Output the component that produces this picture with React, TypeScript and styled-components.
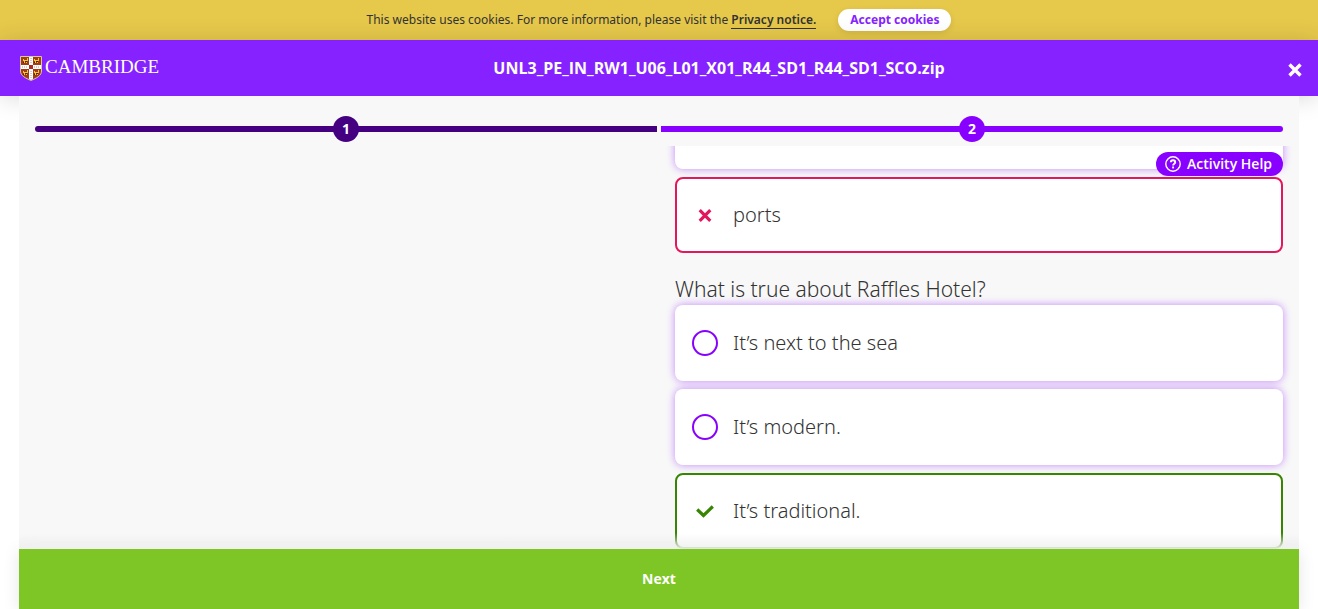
import React, { useState } from "react";
import styled, { createGlobalStyle, css } from "styled-components";

const GlobalStyle = createGlobalStyle`
  *, *::before, *::after { box-sizing: border-box; }
  body {
    margin: 0;
    background: #ffffff;
    color: #333333;
    font-family: "Open Sans", "Noto Sans", sans-serif;
  }
  button, input { font: inherit; }
`;

const Page = styled.div`
  display: flex;
  flex-direction: column;
  height: 100vh;
  overflow: hidden;
`;

const CookieBar = styled.aside`
  display: flex;
  flex: none;
  align-items: center;
  justify-content: center;
  gap: 22px;
  height: 40px;
  background: #e6c84b;
  font-family: "Noto Sans", sans-serif;
  font-size: 12px;
  line-height: 16px;
`;

const CookieText = styled.p`
  margin: 0;
`;

const PrivacyLink = styled.a`
  color: #333333;
  font-weight: 600;
  text-decoration: none;
  border-bottom: 1px solid #333333;
`;

const AcceptButton = styled.button`
  height: 22px;
  padding: 0 12px;
  border: 0;
  border-radius: 11px;
  background: #ffffff;
  color: #8522ff;
  font-weight: 700;
  box-shadow: 0 2px 6px rgba(0, 0, 0, 0.1);
  cursor: pointer;
`;

const Header = styled.header`
  display: grid;
  grid-template-columns: 160px 1fr 40px;
  flex: none;
  align-items: center;
  height: 56px;
  padding: 0 16px 0 20px;
  background: #8522ff;
  color: #ffffff;
  box-shadow: 0 2px 24px rgba(0, 0, 0, 0.15);
`;

const Brand = styled.a`
  display: flex;
  align-items: center;
  gap: 3px;
  color: #ffffff;
  font-family: "Liberation Serif", serif;
  font-size: 19px;
  line-height: 24px;
  text-decoration: none;
`;

const BrandName = styled.span`
  padding-bottom: 2px;
`;

const Title = styled.h1`
  margin: 0;
  padding-right: 4px;
  font-size: 16px;
  line-height: 24px;
  font-weight: 700;
  text-align: center;
`;

const CloseButton = styled.button`
  display: flex;
  justify-content: flex-end;
  padding: 4px 0 0;
  border: 0;
  background: none;
  color: #ffffff;
  cursor: pointer;
`;

const Activity = styled.main`
  position: relative;
  display: flex;
  flex: 1;
  flex-direction: column;
  min-height: 0;
  margin: 0 19px;
  background: #f8f8f8;
`;

const Progress = styled.ol`
  display: grid;
  grid-template-columns: 1fr 1fr;
  flex: none;
  align-items: center;
  gap: 4px;
  height: 50px;
  margin: 0;
  padding: 16px 16px 0;
  list-style: none;
`;

const Step = styled.li<{ $done?: boolean }>`
  display: flex;
  align-items: center;
  justify-content: center;
  height: 6px;
  border-radius: ${(p) => (p.$done ? "3px 0 0 3px" : "0 3px 3px 0")};
  background: ${(p) => (p.$done ? "#440080" : "#8800ff")};
`;

const StepButton = styled.button<{ $done?: boolean }>`
  flex: none;
  width: 26px;
  height: 26px;
  padding: 0;
  border: 0;
  border-radius: 50%;
  background: ${(p) => (p.$done ? "#440080" : "#8800ff")};
  color: #ffffff;
  font-size: 14px;
  line-height: 26px;
  font-weight: 700;
  cursor: pointer;
`;

const Columns = styled.div`
  position: relative;
  display: grid;
  grid-template-columns: 1fr 1fr;
  flex: 1;
  gap: 32px;
  min-height: 0;
  padding: 0 16px;
  overflow: hidden;

  &::after {
    content: "";
    position: absolute;
    inset: auto 0 0;
    height: 16px;
    background: linear-gradient(rgba(246, 246, 246, 0), rgba(240, 240, 240, 0.95));
    pointer-events: none;
  }
`;

const Questions = styled.form`
  display: flex;
  flex-direction: column;
  justify-content: flex-end;
  grid-column: 2;
  min-height: 0;
`;

const Question = styled.fieldset`
  display: flex;
  flex: none;
  flex-direction: column;
  gap: 8px;
  min-width: 0;
  margin: 0;
  padding: 0;
  border: 0;

  & + & { margin-top: 20px; }
`;

const Prompt = styled.legend`
  padding: 0;
  font-family: "Noto Sans", sans-serif;
  font-size: 21px;
  line-height: 32px;
  font-weight: 300;
`;

type Result = "right" | "wrong" | undefined;

const Option = styled.label<{ $result: Result }>`
  display: flex;
  align-items: center;
  gap: 15px;
  height: 76px;
  padding: 0 17px;
  border-radius: 8px;
  background: #ffffff;
  font-family: "Noto Sans", sans-serif;
  font-size: 20px;
  line-height: 28px;
  font-weight: 300;
  cursor: pointer;
  ${(p) =>
    p.$result
      ? css`
          padding: 0 15px;
          border: 2px solid ${p.$result === "right" ? "#378500" : "#e2175c"};
        `
      : css`
          box-shadow: 0 0 8px rgba(136, 0, 255, 0.45);
        `}
`;

const Mark = styled.span`
  display: grid;
  place-items: center;
  width: 26px;
  height: 26px;

  & > * { grid-area: 1 / 1; }
`;

const Radio = styled.input<{ $result: Result }>`
  appearance: none;
  width: 26px;
  height: 26px;
  margin: 0;
  border: 2px solid #8800ff;
  border-radius: 50%;
  background: #ffffff;
  opacity: ${(p) => (p.$result ? 0 : 1)};

  &:checked { box-shadow: inset 0 0 0 4px #ffffff, inset 0 0 0 12px #8800ff; }
`;

const HelpButton = styled.button`
  position: absolute;
  top: 6px;
  right: 16px;
  display: flex;
  align-items: center;
  gap: 6px;
  height: 24px;
  padding: 0 11px 0 9px;
  border: 0;
  border-radius: 12px;
  background: #8800ff;
  color: #ffffff;
  font-size: 14px;
  line-height: 24px;
  font-weight: 600;
  cursor: pointer;
`;

const NextButton = styled.button`
  flex: none;
  height: 60px;
  border: 0;
  background: #7dc625;
  color: #ffffff;
  font-size: 14px;
  line-height: 20px;
  font-weight: 700;
  box-shadow: 0 2px 16px rgba(0, 0, 0, 0.1);
  cursor: pointer;
`;

const Lion = ({ x, y }: { x: number; y: number }) => (
  <g transform={`translate(${x} ${y})`}>
    <path d="M0 1h1v1h3V0h1v3H4v2H3V4H2v1H1V3H0z" fill="#f0c832" />
    <path d="M2 3h2v1H2zM0 4h1v1H0z" fill="#4a2410" />
  </g>
);

const Shield = () => (
  <svg width="22" height="25" viewBox="0 0 22 25" aria-hidden="true">
    <path d="M.5.5h21V15c0 5-5 7-10.500 9.500C5.500 22 .5 20 .5 15z" fill="#a33a18" stroke="#d9c9a0" />
    <path d="M9 1h4v22l-2 1-2-1z" fill="#fff" />
    <path d="M1 9h20v4H1z" fill="#fff" />
    <path d="M9 9h4v4H9z" fill="#b0281e" />
    <path d="M11 2v5M11 15v7M2 11h6M14 11h6" stroke="#a8a0a0" strokeWidth="1" strokeDasharray="1 1" />
    <Lion x={3} y={2} />
    <Lion x={14} y={2} />
    <Lion x={3} y={14} />
    <Lion x={14} y={14} />
  </svg>
);

const Cross = () => (
  <svg width="14" height="14" viewBox="0 0 14 14" aria-hidden="true">
    <path d="M1.500 1.500l11 11M12.500 1.500l-11 11" fill="none" stroke="currentColor" strokeWidth="3.400" />
  </svg>
);

const WrongIcon = () => (
  <svg width="14" height="14" viewBox="0 0 14 14" role="img" aria-label="Incorrect">
    <path d="M1.700 2.200l10.600 10.600M12.300 2.200L1.700 12.800" fill="none" stroke="#e2175c" strokeWidth="3.200" />
  </svg>
);

const RightIcon = () => (
  <svg width="18" height="14" viewBox="0 0 18 14" role="img" aria-label="Correct">
    <path d="M1.200 5.500l6.300 6L16.800 2.500" fill="none" stroke="#378500" strokeWidth="3.200" />
  </svg>
);

const HelpIcon = () => (
  <svg width="16" height="16" viewBox="0 0 16 16" fill="none" stroke="currentColor" aria-hidden="true">
    <circle cx="8" cy="8" r="7.200" strokeWidth="1.400" />
    <path d="M5.800 6.300c0-1.300 1-2 2.200-2s2.200.8 2.200 1.900c0 1.500-2.100 1.500-2.100 3.200" strokeWidth="1.900" />
    <path d="M8.100 10.500v1.900" strokeWidth="1.900" />
  </svg>
);

interface Answer {
  id: string;
  text: string;
  result?: Result;
}

const placeAnswers: Answer[] = [
  { id: "place-a", text: "" },
  { id: "place-b", text: "ports", result: "wrong" },
];

const hotelAnswers: Answer[] = [
  { id: "sea", text: "It’s next to the sea" },
  { id: "modern", text: "It’s modern." },
  { id: "traditional", text: "It’s traditional.", result: "right" },
];

interface AnswersProps {
  name: string;
  answers: Answer[];
  initial: string;
}

const Answers = ({ name, answers, initial }: AnswersProps) => {
  const [chosen, setChosen] = useState(initial);
  return (
    <>
      {answers.map((a) => (
        <Option key={a.id} $result={a.result} htmlFor={a.id}>
          <Mark>
            <Radio
              type="radio"
              id={a.id}
              name={name}
              $result={a.result}
              checked={chosen === a.id}
              onChange={() => setChosen(a.id)}
            />
            {a.result === "wrong" && <WrongIcon />}
            {a.result === "right" && <RightIcon />}
          </Mark>
          {a.text}
        </Option>
      ))}
    </>
  );
};

export default function App() {
  return (
    <Page>
      <GlobalStyle />
      <CookieBar>
        <CookieText>
          This website uses cookies. For more information, please visit the{" "}
          <PrivacyLink href="#privacy">Privacy notice.</PrivacyLink>
        </CookieText>
        <AcceptButton type="button">Accept cookies</AcceptButton>
      </CookieBar>
      <Header>
        <Brand href="#home">
          <Shield />
          <BrandName>CAMBRIDGE</BrandName>
        </Brand>
        <Title>UNL3_PE_IN_RW1_U06_L01_X01_R44_SD1_R44_SD1_SCO.zip</Title>
        <CloseButton type="button" aria-label="Close">
          <Cross />
        </CloseButton>
      </Header>
      <Activity>
        <Progress>
          <Step $done>
            <StepButton type="button" $done>1</StepButton>
          </Step>
          <Step>
            <StepButton type="button">2</StepButton>
          </Step>
        </Progress>
        <Columns>
          <Questions>
            <Question>
              <Answers name="place" answers={placeAnswers} initial="place-b" />
            </Question>
            <Question>
              <Prompt>What is true about Raffles Hotel?</Prompt>
              <Answers name="hotel" answers={hotelAnswers} initial="traditional" />
            </Question>
          </Questions>
          <HelpButton type="button">
            <HelpIcon />
            Activity Help
          </HelpButton>
        </Columns>
        <NextButton type="button">Next</NextButton>
      </Activity>
    </Page>
  );
}
